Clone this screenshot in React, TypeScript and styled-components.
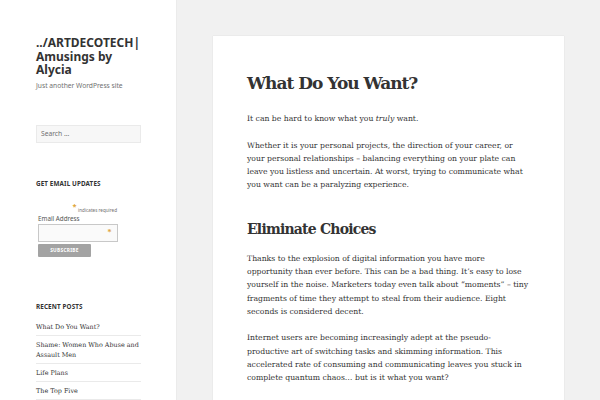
import { createGlobalStyle, styled } from 'styled-components';

const Global = createGlobalStyle`
  html, body {
    margin: 0;
    padding: 0;
    background: #f1f1f1;
    color: #333;
  }
  * {
    box-sizing: border-box;
  }
`;

const serif = `"DejaVu Serif", "Liberation Serif", serif`;
const sans = `"Noto Sans", "Open Sans", sans-serif`;

const Page = styled.div`
  display: flex;
  align-items: flex-start;
  width: 600px;
  height: 400px;
  overflow: hidden;
`;

const Sidebar = styled.aside`
  width: 176px;
  height: 400px;
  flex-shrink: 0;
  background: #fff;
  box-shadow: 0 0 1px rgba(0, 0, 0, 0.15);
  padding: 36px 35px 0 36px;
`;

const SiteTitle = styled.h1`
  margin: 0;
  font-family: ${sans};
  font-weight: 700;
  font-size: 12px;
  line-height: 13.5px;
  color: #333;
`;

const Tagline = styled.p`
  margin: 4px 0 0;
  font-family: ${sans};
  font-size: 6.7px;
  line-height: 10px;
  color: #707070;
`;

const SearchInput = styled.input`
  display: block;
  margin-top: 34px;
  width: 105px;
  height: 18px;
  padding: 0 4px;
  border: 1px solid #eaeaea;
  background: #f7f7f7;
  font-family: ${sans};
  font-size: 6.7px;
  color: #333;
  outline: none;

  &::placeholder {
    color: #707070;
  }
`;

const WidgetTitle = styled.h2<{ $gap: number }>`
  margin: ${(p) => p.$gap}px 0 0;
  font-family: ${sans};
  font-weight: 700;
  font-size: 6.3px;
  line-height: 10px;
  letter-spacing: 0.02em;
  text-transform: uppercase;
  color: #333;
`;

const Required = styled.div`
  margin: 17px 0 0;
  padding-right: 24px;
  text-align: right;
  font-family: ${sans};
  font-size: 4.6px;
  line-height: 8px;
  color: #707070;
`;

const Star = styled.span<{ $size?: number }>`
  color: #e0a43a;
  font-size: ${(p) => p.$size ?? 7.5}px;
  font-weight: 700;
  vertical-align: ${(p) => (p.$size ? 'middle' : 'super')};
  line-height: 0;
  margin-right: 1.5px;
`;

const FieldLabel = styled.label`
  display: block;
  margin: 0 0 0 2px;
  font-family: ${sans};
  font-size: 6.3px;
  line-height: 9px;
  color: #555;
`;

const FieldBox = styled.div`
  display: flex;
  align-items: center;
  justify-content: flex-end;
  margin: 1px 0 0 2px;
  width: 80px;
  height: 18px;
  padding-right: 4px;
  border: 1px solid #c8c8c8;
  background: #fafafa;
`;

const SubmitButton = styled.button`
  display: block;
  margin: 2px 0 0 2px;
  width: 53px;
  height: 13px;
  padding: 0;
  border: none;
  border-radius: 1px;
  background: #a3a3a3;
  color: #fff;
  font-family: ${sans};
  font-weight: 700;
  font-size: 4.8px;
  letter-spacing: 0.06em;
  text-transform: uppercase;
`;

const PostList = styled.ul`
  list-style: none;
  margin: 7px 0 0;
  padding: 0;
`;

const PostItem = styled.li`
  border-bottom: 1px solid #eaeaea;
  padding: 3.3px 0 3.7px;
  font-family: ${serif};
  font-size: 6.4px;
  line-height: 10px;
  color: #333;
`;

const Main = styled.main`
  flex: 1;
  padding: 36px 0 0 37px;
`;

const Card = styled.article`
  width: 351px;
  height: 380px;
  background: #fff;
  box-shadow: 0 0 1px rgba(0, 0, 0, 0.15);
  padding: 34px 34px 0;
`;

const EntryTitle = styled.h1`
  margin: 0 0 16.3px;
  font-family: ${serif};
  font-weight: 700;
  font-size: 17px;
  letter-spacing: -1px;
  line-height: 26px;
  color: #333;
`;

const Para = styled.p`
  margin: 0 0 13px;
  font-family: ${serif};
  font-size: 7.7px;
  line-height: 13.3px;
  color: #333;
`;

const SubHeading = styled.h2`
  margin: 27.5px 0 12.6px;
  font-family: ${serif};
  font-weight: 700;
  font-size: 14px;
  letter-spacing: -0.8px;
  line-height: 20px;
  color: #333;
`;

const posts = [
  'What Do You Want?',
  'Shame: Women Who Abuse and Assault Men',
  'Life Plans',
  'The Top Five',
];

export default function App() {
  return (
    <>
      <Global />
      <Page>
        <Sidebar>
          <SiteTitle>../ARTDECOTECH| Amusings by Alycia</SiteTitle>
          <Tagline>Just another WordPress site</Tagline>
          <SearchInput placeholder="Search …" />

          <WidgetTitle $gap={36}>Get Email Updates</WidgetTitle>
          <Required>
            <Star>*</Star>indicates required
          </Required>
          <FieldLabel>Email Address</FieldLabel>
          <FieldBox>
            <Star $size={8}>*</Star>
          </FieldBox>
          <SubmitButton>Subscribe</SubmitButton>

          <WidgetTitle $gap={45}>Recent Posts</WidgetTitle>
          <PostList>
            {posts.map((p) => (
              <PostItem key={p}>{p}</PostItem>
            ))}
          </PostList>
        </Sidebar>

        <Main>
          <Card>
            <EntryTitle>What Do You Want?</EntryTitle>
            <Para>
              It can be hard to know what you <em>truly</em> want.
            </Para>
            <Para>
              Whether it is your personal projects, the direction of your career, or your
              personal relationships – balancing everything on your plate can leave you
              listless and uncertain. At worst, trying to communicate what you want can be a
              paralyzing experience.
            </Para>
            <SubHeading>Eliminate Choices</SubHeading>
            <Para>
              Thanks to the explosion of digital information you have more opportunity than
              ever before. This can be a bad thing. It’s easy to lose yourself in the noise.
              Marketers today even talk about “moments” – tiny fragments of time they attempt
              to steal from their audience. Eight seconds is considered decent.
            </Para>
            <Para>
              Internet users are becoming increasingly adept at the pseudo-productive art of
              switching tasks and skimming information. This accelerated rate of consuming and
              communicating leaves you stuck in complete quantum chaos… but is it what you
              want?
            </Para>
          </Card>
        </Main>
      </Page>
    </>
  );
}
